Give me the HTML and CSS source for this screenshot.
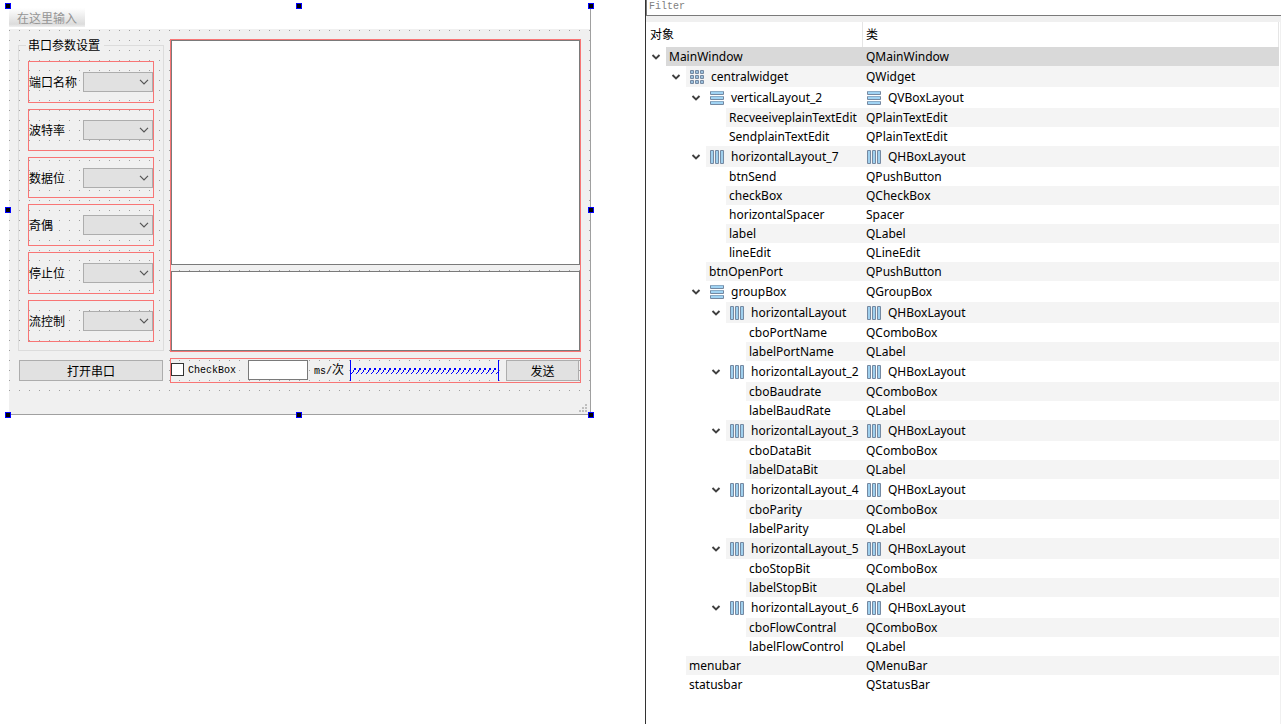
FILE: index.html
```html
<!DOCTYPE html>
<html lang="zh-CN">
<head>
<meta charset="utf-8">
<title>MainWindow</title>
<link rel="stylesheet" href="styles.css">
</head>
<body>
<svg class="defs" aria-hidden="true">
  <defs>
    <pattern id="coil" width="5" height="8" patternUnits="userSpaceOnUse"><path d="M3 1h2v1h-1v1h-1zM2 3h1v2h-1zM1 5h1v1h-1zM0 6h1v1h-1zM4 2h1v1h-1z" fill="#00f"/></pattern>
    <symbol id="chev" viewBox="0 0 10 10"><path d="M1.5 3L5 6.5L8.5 3" fill="none" stroke="#404040" stroke-width="1.9"/></symbol>
    <symbol id="drop" viewBox="0 0 10 6"><path d="M1 .8L5 4.8L9 .8" fill="none" stroke="#555" stroke-width="1.2"/></symbol>
    <symbol id="vbox" viewBox="0 0 14 14"><g fill="#7489a2"><rect width="14" height="4" rx="1"/><rect y="5" width="14" height="4" rx="1"/><rect y="10" width="14" height="4" rx="1"/></g><path d="M1 0h12v1H1zM1 5h12v1H1zM1 10h12v1H1z" fill="#8aabc6"/><path d="M1 1h12v2H1zM1 6h12v2H1zM1 11h12v2H1z" fill="#a0d3f3"/></symbol>
    <symbol id="hbox" viewBox="0 0 14 14"><g fill="#7489a2"><rect width="4" height="14" rx="1"/><rect x="5" width="4" height="14" rx="1"/><rect x="10" width="4" height="14" rx="1"/></g><path d="M1 1h2v12H1zM6 1h2v12H6zM11 1h2v12h-2z" fill="#a0d0ee"/></symbol>
    <symbol id="grid" viewBox="0 0 14 14"><g fill="#7489a2"><rect width="4" height="4" rx="1"/><rect x="5" width="4" height="4" rx="1"/><rect x="10" width="4" height="4" rx="1"/><rect y="5" width="4" height="4" rx="1"/><rect x="5" y="5" width="4" height="4" rx="1"/><rect x="10" y="5" width="4" height="4" rx="1"/><rect y="10" width="4" height="4" rx="1"/><rect x="5" y="10" width="4" height="4" rx="1"/><rect x="10" y="10" width="4" height="4" rx="1"/></g><path d="M1 1h2v2H1zM6 1h2v2H6zM11 1h2v2h-2zM1 6h2v2H1zM6 6h2v2H6zM11 6h2v2h-2zM1 11h2v2H1zM6 11h2v2H6zM11 11h2v2h-2z" fill="#9cc0dc"/></symbol>
  </defs>
</svg>
<div class="workspace">
  <main class="designer">
    <div class="form">
      <nav class="menubar"><button class="menu-item" type="button">在这里输入</button></nav>
      <div class="central">
        <fieldset class="group">
          <legend>串口参数设置</legend>
          <div class="pair"><label for="port">端口名称</label><span class="combo"><select id="port"></select><svg><use href="#drop"/></svg></span></div>
          <div class="pair"><label for="baud">波特率</label><span class="combo"><select id="baud"></select><svg><use href="#drop"/></svg></span></div>
          <div class="pair"><label for="data">数据位</label><span class="combo"><select id="data"></select><svg><use href="#drop"/></svg></span></div>
          <div class="pair"><label for="parity">奇偶</label><span class="combo"><select id="parity"></select><svg><use href="#drop"/></svg></span></div>
          <div class="pair"><label for="stop">停止位</label><span class="combo"><select id="stop"></select><svg><use href="#drop"/></svg></span></div>
          <div class="pair"><label for="flow">流控制</label><span class="combo"><select id="flow"></select><svg><use href="#drop"/></svg></span></div>
        </fieldset>
        <div class="edits">
          <textarea class="receive" aria-label="接收"></textarea>
          <textarea class="send" aria-label="发送内容"></textarea>
        </div>
        <button class="push open" type="button">打开串口</button>
        <div class="sendbar">
          <input type="checkbox" id="auto"><label class="mono check-label" for="auto">CheckBox</label>
          <input class="interval" type="text" id="interval"><label class="mono unit" for="interval">ms/<span class="han">次</span></label>
          <div class="spacer"><svg><rect width="100%" height="8" fill="url(#coil)"/></svg></div>
          <button class="push submit" type="button">发送</button>
        </div>
      </div>
      <div class="statusbar"><svg class="grip" viewBox="0 0 8 8"><path d="M6 0h2v2h-2zM3 3h2v2h-2zM6 3h2v2h-2zM0 6h2v2h-2zM3 6h2v2h-2zM6 6h2v2h-2z" fill="#bfbfbf"/></svg></div>
      <i class="handle top left"></i><i class="handle top center"></i><i class="handle top right"></i>
      <i class="handle middle left"></i><i class="handle middle right"></i>
      <i class="handle bottom left"></i><i class="handle bottom center"></i><i class="handle bottom right"></i>
    </div>
  </main>
  <aside class="inspector">
    <input class="filter mono" type="text" placeholder="Filter" aria-label="Filter">
    <div class="tree-frame">
      <table class="tree">
        <colgroup><col class="col-object"><col></colgroup>
        <thead><tr><th>对象</th><th>类</th></tr></thead>
        <tbody id="rows"></tbody>
      </table>
    </div>
  </aside>
</div>
<script src="tree.js"></script>
</body>
</html>
```
FILE: tree.js
```js
// level, object name, class name, object icon, class icon, expandable
const items = [
  [0, "MainWindow", "QMainWindow", "", "", 1],
  [1, "centralwidget", "QWidget", "grid", "", 1],
  [2, "verticalLayout_2", "QVBoxLayout", "vbox", "vbox", 1],
  [3, "RecveeiveplainTextEdit", "QPlainTextEdit"],
  [3, "SendplainTextEdit", "QPlainTextEdit"],
  [2, "horizontalLayout_7", "QHBoxLayout", "hbox", "hbox", 1],
  [3, "btnSend", "QPushButton"],
  [3, "checkBox", "QCheckBox"],
  [3, "horizontalSpacer", "Spacer"],
  [3, "label", "QLabel"],
  [3, "lineEdit", "QLineEdit"],
  [2, "btnOpenPort", "QPushButton"],
  [2, "groupBox", "QGroupBox", "vbox", "", 1]
];
[["", "PortName", "PortName"], ["_2", "Baudrate", "BaudRate"], ["_3", "DataBit", "DataBit"],
 ["_4", "Parity", "Parity"], ["_5", "StopBit", "StopBit"], ["_6", "FlowContral", "FlowControl"]
].forEach(([suffix, combo, label]) => {
  items.push([3, "horizontalLayout" + suffix, "QHBoxLayout", "hbox", "hbox", 1],
    [4, "cbo" + combo, "QComboBox"], [4, "label" + label, "QLabel"]);
});
items.push([1, "menubar", "QMenuBar"], [1, "statusbar", "QStatusBar"]);

const icon = (id, cls) => id ? `<svg class="${cls}"><use href="#${id}"/></svg>` : "";
document.getElementById("rows").innerHTML = items.map(([level, name, type, nameIcon, typeIcon, open], i) =>
  `<tr class="${i === 0 ? "selected" : ""}${nameIcon ? "tall" : ""}">
    <td><div class="cell level-${level}"><span class="twisty">${open ? icon("chev", "chev") : ""}</span><span class="name">${icon(nameIcon, "icon")}${name}</span></div></td>
    <td><div class="cell"><span class="name type">${icon(typeIcon, "icon")}${type}</span></div></td>
  </tr>`).join("");
```
FILE: styles.css
```css
* { box-sizing: border-box; }
body {
  margin: 0;
  background: #fff;
  color: #000;
  font: 12px/13px "Noto Sans CJK SC", sans-serif;
}
button, input, select, textarea { font: inherit; color: inherit; margin: 0; border-radius: 0; }
.defs { position: absolute; width: 0; height: 0; }
.mono { font-family: "Liberation Mono", "Noto Sans CJK SC", monospace; font-size: 10px; }
.han { font-size: 12px; }

.workspace {
  display: grid;
  grid-template-columns: 645fr 636fr;
  min-height: 100vh;
}
.designer { padding: 6px 54px 0 9px; }
.form {
  position: relative;
  background: #f0f0f0;
  border: solid #a0a0a0;
  border-width: 0 1px 1px 0;
}
.menubar { height: 23px; padding-top: 2px; background: #fff; }
.menu-item {
  height: 19px;
  padding: 0 8px;
  border: 0;
  color: #959595;
  background: linear-gradient(#fff, #dcdcdc 85%, #f0f0f0);
}
.central {
  display: grid;
  grid-template-columns: 146px 1fr;
  gap: 6px;
  padding: 10px 9px 8px;
  background: conic-gradient(from 270deg at 1px 1px, #a0a0a0 25%, transparent 0) 0 1px / 10px 10px;
}
.group {
  display: grid;
  grid-auto-rows: 1fr;
  gap: 6px;
  min-width: 0;
  margin: 0 0 1px;
  padding: 9px 9px 8px;
  border: 1px solid #dcdcdc;
}
.group legend { margin-left: -2px; padding: 0 4px 2px 2px; line-height: 11px; }
.pair {
  display: flex;
  align-items: center;
  justify-content: space-between;
  border: 1px solid #f87575;
}
.pair label { padding-bottom: 1px; }
.combo { display: grid; width: 70px; height: 20px; align-items: center; }
.combo > * { grid-area: 1 / 1; }
.combo select {
  appearance: none;
  width: 100%;
  height: 20px;
  padding: 0;
  border: 1px solid #adadad;
  background: #e1e1e1;
}
.combo svg { width: 10px; height: 6px; margin-right: 4px; justify-self: end; pointer-events: none; }
.edits {
  display: flex;
  flex-direction: column;
  gap: 6px;
  border: 1px solid #f87575;
}
textarea {
  display: block;
  width: 100%;
  border: 1px solid #7a7a7a;
  background: #fff;
  resize: none;
}
.receive { height: 225px; }
.send { height: 80px; }
.push { padding: 0; border: 1px solid #adadad; background: #e1e1e1; height: 21px; }
.open { margin: 2px 1px; }
.sendbar {
  display: flex;
  align-items: center;
  height: 25px;
  border: 1px solid #f87575;
}
.sendbar input[type="checkbox"] {
  appearance: none;
  width: 13px;
  height: 13px;
  margin-bottom: 2px;
  border: 1px solid #333;
  background: #fff;
}
.check-label { margin: 0 12px 0 4px; }
.interval { width: 60px; height: 20px; margin-bottom: 1px; padding: 0 2px; border: 1px solid #7a7a7a; background: #fff; }
.unit { margin: 0 6px; padding-top: 2px; }
.spacer {
  display: flex;
  align-items: center;
  flex: 1;
  height: 21px;
  border: solid #00f;
  border-width: 0 1px;
}
.spacer svg { width: 100%; height: 8px; }
.submit { width: 73px; margin: 0 1px 0 7px; }
.statusbar { display: flex; height: 23px; align-items: flex-end; justify-content: flex-end; padding: 2px 3px; }
.grip { width: 8px; height: 8px; }

.handle { position: absolute; width: 6px; height: 6px; background: #000; border: 1px solid #00f; }
.top { top: -3px; }
.middle { top: calc(50% - 3px); }
.bottom { bottom: -4px; }
.left { left: -4px; }
.center { left: calc(50% - 4px); }
.right { right: -4px; }

.inspector { border-left: 1px solid #333; background: #fff; min-width: 0; }
.filter {
  display: block;
  width: 100%;
  height: 16px;
  padding: 0 2px 2px;
  border: solid #7a7a7a;
  border-width: 0 0 1px 1px;
}
.filter::placeholder { color: #808080; opacity: 1; }
.tree-frame {
  min-height: calc(100vh - 16px);
  padding-right: 1px;
  border-top: 6px solid #f0f0f0;
  border-right: 1px solid #f0f0f0;
}
.tree {
  width: 100%;
  border-spacing: 0;
  table-layout: fixed;
}
.col-object { width: 216px; }
.tree th {
  height: 25px;
  padding: 0 4px 2px 3px;
  font-weight: normal;
  text-align: left;
  border-left: 1px solid #e5e5e5;
}
.tree th:first-child { padding-left: 4px; border-left: 0; }
.tree th:last-child { border-right: 1px solid #e5e5e5; }
.tree td { padding: 0; }
.cell { display: flex; height: 19px; font: 12px/19px "Noto Sans", sans-serif; white-space: nowrap; }
.tall .cell { height: 21px; line-height: 21px; }
.twisty { display: flex; flex: none; width: 20px; align-items: center; justify-content: center; }
.name { display: flex; flex: 1; align-items: center; padding-left: 3px; }
.cell > .type { padding-left: 4px; }
.tree tbody tr:nth-child(even) .name { background: #f4f4f4; }
.tree tbody .selected .name { background: #d9d9d9; }
.level-1 { padding-left: 20px; }
.level-2 { padding-left: 40px; }
.level-3 { padding-left: 60px; }
.level-4 { padding-left: 80px; }
.chev { width: 10px; height: 10px; }
.icon { flex: none; width: 14px; height: 14px; margin: 0 7px 0 1px; }
```
